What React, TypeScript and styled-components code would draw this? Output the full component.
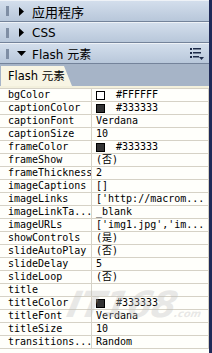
import React from 'react';
import styled, { createGlobalStyle } from 'styled-components';

const GlobalStyle = createGlobalStyle`
  html, body {
    margin: 0;
    padding: 0;
    background: #ffffff;
  }
`;

interface Prop {
  name: string;
  value: string;
  swatch?: string;
}

const props: Prop[] = [
  { name: 'bgColor', value: '#FFFFFF', swatch: '#ffffff' },
  { name: 'captionColor', value: '#333333', swatch: '#333333' },
  { name: 'captionFont', value: 'Verdana' },
  { name: 'captionSize', value: '10' },
  { name: 'frameColor', value: '#333333', swatch: '#333333' },
  { name: 'frameShow', value: '(否)' },
  { name: 'frameThickness', value: '2' },
  { name: 'imageCaptions', value: '[]' },
  { name: 'imageLinks', value: "['http://macrom..." },
  { name: 'imageLinkTa...', value: '_blank' },
  { name: 'imageURLs', value: "['img1.jpg','im..." },
  { name: 'showControls', value: '(是)' },
  { name: 'slideAutoPlay', value: '(否)' },
  { name: 'slideDelay', value: '5' },
  { name: 'slideLoop', value: '(否)' },
  { name: 'title', value: '' },
  { name: 'titleColor', value: '#333333', swatch: '#333333' },
  { name: 'titleFont', value: 'Verdana' },
  { name: 'titleSize', value: '10' },
  { name: 'transitions...', value: 'Random' },
];

const Panel = styled.div`
  position: relative;
  width: 212px;
  height: 353px;
  box-sizing: border-box;
  border-right: 3px solid #1e2a58;
  display: flex;
  flex-direction: column;
  overflow: hidden;
  background: #fffffb;
`;

const GroupHeader = styled.div<{ $h: number }>`
  height: ${({ $h }) => $h}px;
  box-sizing: border-box;
  display: flex;
  align-items: center;
  padding-left: 6px;
  padding-right: 5px;
  background: linear-gradient(#d3deec, #b8c7da);
  border-top: 1px solid #eef2f7;
  border-bottom: 1px solid #74839a;
`;

const Grip = styled.div`
  width: 3px;
  height: 10px;
  margin-right: 8px;
  background-image: radial-gradient(circle, #7f8ea4 0.8px, transparent 1px);
  background-size: 2px 2px;
`;

const Arrow = styled.svg`
  width: 9px;
  height: 9px;
  margin-right: 6px;
  flex: none;
`;

const HeaderTitle = styled.span<{ $cjk?: boolean }>`
  font-family: ${({ $cjk }) => ($cjk ? '"Noto Sans CJK SC", sans-serif' : '"DejaVu Sans", "Noto Sans CJK SC", sans-serif')};
  font-size: ${({ $cjk }) => ($cjk ? 13 : 12)}px;
  color: #000;
  flex: 1;
  white-space: nowrap;
`;

const MenuIcon = styled.svg`
  width: 14px;
  height: 12px;
  flex: none;
`;

const TabStrip = styled.div`
  height: 24px;
  box-sizing: border-box;
  background: #a6b4c7;
  border-bottom: 2px solid #f3f0dc;
  display: flex;
  align-items: flex-end;
  padding-left: 1px;
`;

const Tab = styled.div`
  height: 20px;
  width: 71px;
  box-sizing: border-box;
  background: #f8f5e4;
  padding-left: 7px;
  font-family: "DejaVu Sans", "Noto Sans CJK SC", sans-serif;
  font-size: 11.5px;
  line-height: 20px;
  color: #000;
  white-space: nowrap;
  clip-path: polygon(0 0, 63px 0, 71px 100%, 0 100%);
`;

const Table = styled.div`
  display: grid;
  grid-template-columns: 92px 1fr;
  border-top: 1px solid #d6d2c6;
  border-right: 1px solid #d6d2c6;
`;

const Cell = styled.div<{ $name?: boolean }>`
  height: 13px;
  box-sizing: border-box;
  border-bottom: 1px solid #d6d2c6;
  border-right: ${({ $name }) => ($name ? '1px solid #d6d2c6' : 'none')};
  padding-left: ${({ $name }) => ($name ? 8 : 4)}px;
  display: flex;
  align-items: center;
  font-family: "DejaVu Sans Mono", "Noto Sans CJK SC", monospace;
  font-size: 10px;
  line-height: 12px;
  color: #000;
  white-space: nowrap;
  overflow: hidden;
`;

const Swatch = styled.span<{ $c: string }>`
  width: 9px;
  height: 9px;
  box-sizing: border-box;
  border: 1px solid #000;
  background: ${({ $c }) => $c};
  margin-right: 11px;
  flex: none;
`;

const Watermark = styled.div`
  position: absolute;
  left: 68px;
  top: 284px;
  font-family: "DejaVu Sans", sans-serif;
  font-weight: bold;
  font-style: italic;
  font-size: 36px;
  letter-spacing: -1px;
  color: rgba(190, 190, 190, 0.35);
  pointer-events: none;
  transform: skewX(-12deg);
  & span {
    font-size: 10px;
    letter-spacing: 0;
  }
`;

const RightArrow = () => (
  <Arrow viewBox="0 0 9 9">
    <polygon points="2,0 7,4.5 2,9" fill="#000" />
  </Arrow>
);

const DownArrow = () => (
  <Arrow viewBox="0 0 9 9">
    <polygon points="0,2 9,2 4.5,7" fill="#000" />
  </Arrow>
);

const App = () => {
  return (
    <Panel>
      <GlobalStyle />
      <GroupHeader $h={22}>
        <Grip />
        <RightArrow />
        <HeaderTitle $cjk>应用程序</HeaderTitle>
      </GroupHeader>
      <GroupHeader $h={21}>
        <Grip />
        <RightArrow />
        <HeaderTitle>CSS</HeaderTitle>
      </GroupHeader>
      <GroupHeader $h={21}>
        <Grip />
        <DownArrow />
        <HeaderTitle>Flash 元素</HeaderTitle>
        <MenuIcon viewBox="0 0 14 12">
          <rect x="0" y="0" width="2" height="2" fill="#1d2a48" />
          <rect x="3" y="0" width="8" height="1.5" fill="#1d2a48" />
          <rect x="0" y="4" width="2" height="2" fill="#1d2a48" />
          <rect x="3" y="4" width="8" height="1.5" fill="#1d2a48" />
          <rect x="0" y="8" width="2" height="2" fill="#1d2a48" />
          <rect x="3" y="8" width="6" height="1.5" fill="#1d2a48" />
          <polygon points="9,9 14,9 11.5,12" fill="#1d2a48" />
        </MenuIcon>
      </GroupHeader>
      <TabStrip>
        <Tab>Flash 元素</Tab>
      </TabStrip>
      <Table>
        {props.map((p) => (
          <React.Fragment key={p.name}>
            <Cell $name>{p.name}</Cell>
            <Cell>
              {p.swatch && <Swatch $c={p.swatch} />}
              {p.value}
            </Cell>
          </React.Fragment>
        ))}
      </Table>
      <Watermark>
        IT168<span>.com</span>
      </Watermark>
    </Panel>
  );
};

export default App;
